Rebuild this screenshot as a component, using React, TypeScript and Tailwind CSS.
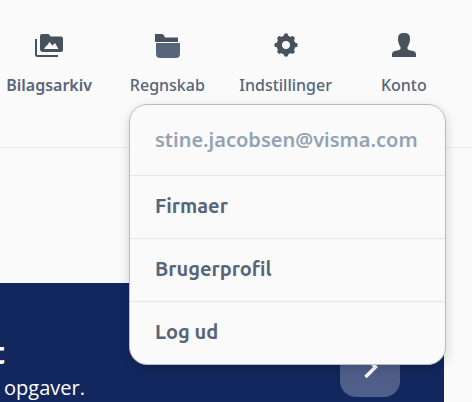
import type { ReactNode } from "react";

type NavItemProps = {
  label: string;
  icon: ReactNode;
  active?: boolean;
};

const menuItems = ["Firmaer", "Brugerprofil", "Log ud"];

export default function App() {
  return (
    <div className="min-h-screen flex flex-col overflow-hidden bg-[#fafafa] font-['Noto_Sans','Open_Sans',sans-serif] text-[#566579]">
      <header className="relative z-10 h-37 border-b border-[#ececec]">
        <nav className="grid grid-cols-4 -ml-2.5 mr-[9px] pt-8">
          <NavItem label="Bilagsarkiv" icon={<ArchiveIcon />} active />
          <NavItem label="Regnskab" icon={<FolderIcon />} />
          <NavItem label="Indstillinger" icon={<GearIcon />} />
          <NavItem label="Konto" icon={<PersonIcon />} />
        </nav>
        <AccountMenu />
      </header>
      <main className="flex-1 flex flex-col pt-[135px]">
        <section className="flex-1 flex items-start justify-between mr-7 pr-11 pt-[54px] bg-[#12275e] text-white">
          <div className="font-['Open_Sans',sans-serif]">
            <h2 className="-ml-2 text-3xl leading-8 font-bold">t</h2>
            <p className="pl-1 pt-[5px] text-xl leading-7">opgaver.</p>
          </div>
          <button
            type="button"
            aria-label="Videre"
            className="w-15 h-15 flex items-center justify-center rounded-2xl bg-[#505f8a]"
          >
            <svg width="24" height="24" viewBox="0 0 24 24" fill="none" stroke="white" strokeWidth="3.5">
              <path d="M7.500 2 17.500 12 7.500 22" />
            </svg>
          </button>
        </section>
      </main>
    </div>
  );
}

function NavItem({ label, icon, active }: NavItemProps) {
  return (
    <a href="#" className="flex flex-col items-center gap-[15px] text-[#47525d]">
      {icon}
      <span
        className={
          active
            ? "text-base leading-6 font-semibold text-[#566579]"
            : "text-base leading-6 font-medium text-[#566579]"
        }
      >
        {label}
      </span>
    </a>
  );
}

function AccountMenu() {
  return (
    <div className="absolute top-26 right-[26px] w-[317px] rounded-[18px] border border-[#b3bcc9] bg-[#fafafa] shadow-[0_4px_12px_rgba(0,0,0,0.16)] text-xl font-bold">
      <p className="h-[71px] flex items-center pl-[25px] border-b border-[#e6e6e6] font-semibold text-[#93a3b3]">
        stine.jacobsen@visma.com
      </p>
      <ul className="divide-y divide-[#e6e6e6]">
        {menuItems.map((item) => (
          <li key={item}>
            <a
              href="#"
              className="h-[62px] flex items-center pl-[25px] pb-0.5 font-['Ubuntu','Open_Sans',sans-serif]"
            >
              {item}
            </a>
          </li>
        ))}
      </ul>
    </div>
  );
}

function ArchiveIcon() {
  return (
    <svg width="28" height="26" viewBox="0 0 28 26">
      <path d="M1 7v15.500Q1 24 2.500 24H23" fill="none" stroke="currentColor" strokeWidth="2" />
      <path
        fill="currentColor"
        d="M7 2h6q1 0 1.500 1l1 1.500H26q2 0 2 2V18q0 2-2 2H8q-3 0-3-3V4q0-2 2-2Z"
      />
      <path fill="#fafafa" d="m9 17 2-3 1.500-1 2-3 2 2.500 1 1 2.500-2.500 1.500 2.500L23.500 17Z" />
    </svg>
  );
}

function FolderIcon() {
  return (
    <svg width="24" height="26" viewBox="0 0 24 26" className="overflow-visible">
      <path fill="#47525d" d="M0 2h7q1.200 0 2 1.500l1 2h13V10H0Z" />
      <path fill="#566579" d="M1 11h24v11q0 4-4 4H5q-4 0-4-4Z" />
    </svg>
  );
}

function GearIcon() {
  return (
    <svg width="24" height="26" viewBox="0 0 24 26">
      <g stroke="currentColor" strokeWidth="4.500" strokeLinecap="round">
        <path d="M12 3.500v3M12 19.500v3M2.500 13h3M18.500 13h3M5.500 6.500l2 2M16.500 17.500l2 2M18.500 6.500l-2 2M7.500 17.500l-2 2" />
      </g>
      <circle cx="12" cy="13" r="6.700" fill="none" stroke="currentColor" strokeWidth="5.400" />
    </svg>
  );
}

function PersonIcon() {
  return (
    <svg width="24" height="26" viewBox="0 0 24 26">
      <path
        fill="currentColor"
        d="M12 1c4 0 6 1.800 6 5.500 0 4-1 6-2.500 8.500v2c.8 1.500 3 1 5.500 2 2.200.8 3 1.500 3 3.500V25H0v-2.500c0-2 .8-2.700 3-3.500 2.500-1 4.700-.5 5.500-2v-2C7 12.500 6 10.500 6 6.500 6 2.800 8 1 12 1Z"
      />
    </svg>
  );
}
